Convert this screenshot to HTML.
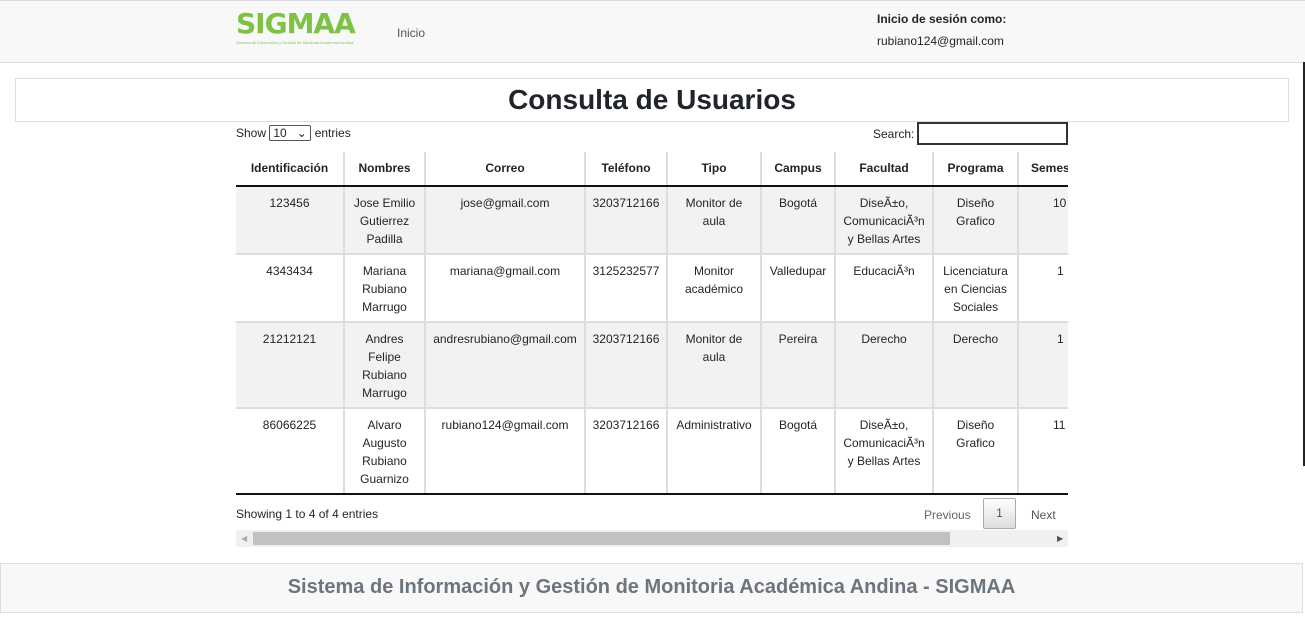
<!DOCTYPE html><html><head><meta charset="utf-8"><style>
*{box-sizing:border-box;margin:0;padding:0}
body{width:1305px;height:620px;background:#fff;font-family:"Liberation Sans",sans-serif;color:#212529;position:relative;overflow:hidden;font-size:12px}
.a{position:absolute}
.nav{left:0;top:0;width:1305px;height:63px;background:#f8f8f8;border-top:1px solid #ddd;border-bottom:1px solid #ddd}
.logo{left:236px;top:7px;color:#7dc243;font-size:28px;font-weight:bold;letter-spacing:-1px;font-family:"DejaVu Sans",sans-serif}
.sub{left:236px;top:40px;font-size:4px;color:#8bbf5a;width:120px;white-space:nowrap;overflow:hidden}
table{border-collapse:collapse;position:absolute;left:236px;top:152px;table-layout:fixed}
td,th{border-left:2px solid #ddd;text-align:center;vertical-align:top;font-size:12px;line-height:18px;padding:7px 8px 5px}
th{height:34px;font-weight:bold;border-bottom:2px solid #111;padding:7px 4px}
td:first-child,th:first-child{border-left:none}
tr.g td{background:#f2f2f2}
tbody tr td{border-top:2px solid #ddd}
tbody tr:first-child td{border-top:none}
td.n{padding-left:2px;padding-right:2px}
td.f{padding-left:6px;padding-right:6px}
</style></head><body>
<div class="a nav"></div>
<div class="a logo">SIGMAA</div>
<div class="a sub">Sistema de Información y Gestión de Monitoria Académica Andina</div>
<div class="a" style="left:397px;top:26px;font-size:12px;color:#555">Inicio</div>
<div class="a" style="left:877px;top:12px;font-size:12px;font-weight:bold">Inicio de sesión como:</div>
<div class="a" style="left:877px;top:34px;font-size:12px">rubiano124@gmail.com</div>
<div class="a" style="left:1303px;top:62px;width:2px;height:404px;background:#222"></div>
<div class="a" style="left:15px;top:78px;width:1274px;height:44px;border:1px solid #ddd;text-align:center;font-size:28px;line-height:42px;font-weight:bold">Consulta de Usuarios</div>
<div class="a" style="left:236px;top:125px">Show <span style="display:inline-block;border:1px solid #555;border-radius:2px;width:42px;height:16px;padding-left:3px;line-height:14px">10 &nbsp;&nbsp;⌄</span> entries</div>
<div class="a" style="left:873px;top:127px">Search:</div>
<div class="a" style="left:917px;top:122px;width:151px;height:23px;border:2px solid #333"></div>
<div class="a" style="left:236px;top:152px;width:832px;height:344px;overflow:hidden">
<table style="left:0;top:0;width:880px">
<colgroup><col style="width:108px"><col style="width:81px"><col style="width:160px"><col style="width:82px"><col style="width:94px"><col style="width:74px"><col style="width:98px"><col style="width:85px"><col style="width:98px"></colgroup>
<thead><tr><th>Identificación</th><th>Nombres</th><th>Correo</th><th>Teléfono</th><th>Tipo</th><th>Campus</th><th>Facultad</th><th>Programa</th><th style="text-align:left;padding-left:12px">Semestre</th></tr></thead>
<tbody>
<tr class="g" style="height:68px"><td>123456</td><td>Jose Emilio Gutierrez Padilla</td><td class="n">jose@gmail.com</td><td class="n">3203712166</td><td>Monitor de aula</td><td class="n">Bogotá</td><td class="f">DiseÃ±o, ComunicaciÃ³n y Bellas Artes</td><td>Diseño Grafico</td><td style="text-align:left;padding-left:34px">10</td></tr>
<tr style="height:68px"><td>4343434</td><td>Mariana Rubiano Marrugo</td><td class="n">mariana@gmail.com</td><td class="n">3125232577</td><td>Monitor académico</td><td class="n">Valledupar</td><td class="n">EducaciÃ³n</td><td class="n">Licenciatura en Ciencias Sociales</td><td style="text-align:left;padding-left:38px">1</td></tr>
<tr class="g" style="height:86px"><td>21212121</td><td>Andres Felipe Rubiano Marrugo</td><td class="n">andresrubiano@gmail.com</td><td class="n">3203712166</td><td>Monitor de aula</td><td class="n">Pereira</td><td class="n">Derecho</td><td>Derecho</td><td style="text-align:left;padding-left:38px">1</td></tr>
<tr style="height:86px"><td>86066225</td><td>Alvaro Augusto Rubiano Guarnizo</td><td class="n">rubiano124@gmail.com</td><td class="n">3203712166</td><td class="n">Administrativo</td><td class="n">Bogotá</td><td class="f">DiseÃ±o, ComunicaciÃ³n y Bellas Artes</td><td>Diseño Grafico</td><td style="text-align:left;padding-left:34px">11</td></tr>
</tbody></table>
<div class="a" style="left:0;top:341px;width:832px;height:3px;background:#fff"></div>
<div class="a" style="left:0;top:341px;width:832px;height:2px;background:#111"></div>
</div>
<div class="a" style="left:236px;top:507px">Showing 1 to 4 of 4 entries</div>
<div class="a" style="left:924px;top:508px;color:#666">Previous</div>
<div class="a" style="left:983px;top:498px;width:33px;height:31px;border:1px solid #aaa;border-radius:2px;background:linear-gradient(#fff,#ddd);text-align:center;line-height:29px;color:#555">1</div>
<div class="a" style="left:1031px;top:508px;color:#555">Next</div>
<div class="a" style="left:236px;top:530px;width:832px;height:17px;background:#f0f0f0"></div>
<div class="a" style="left:253px;top:532px;width:697px;height:13px;background:#c1c1c1"></div>
<div class="a" style="left:241px;top:534px;font-size:8px;color:#aaa">◀</div>
<div class="a" style="left:1057px;top:534px;font-size:8px;color:#555">▶</div>
<div class="a" style="left:0;top:563px;width:1303px;height:50px;background:#f8f8f8;border:1px solid #ddd;text-align:center;font-size:20px;line-height:46px;color:#6c757d;font-weight:bold">Sistema de Información y Gestión de Monitoria Académica Andina - SIGMAA</div>
</body></html>
